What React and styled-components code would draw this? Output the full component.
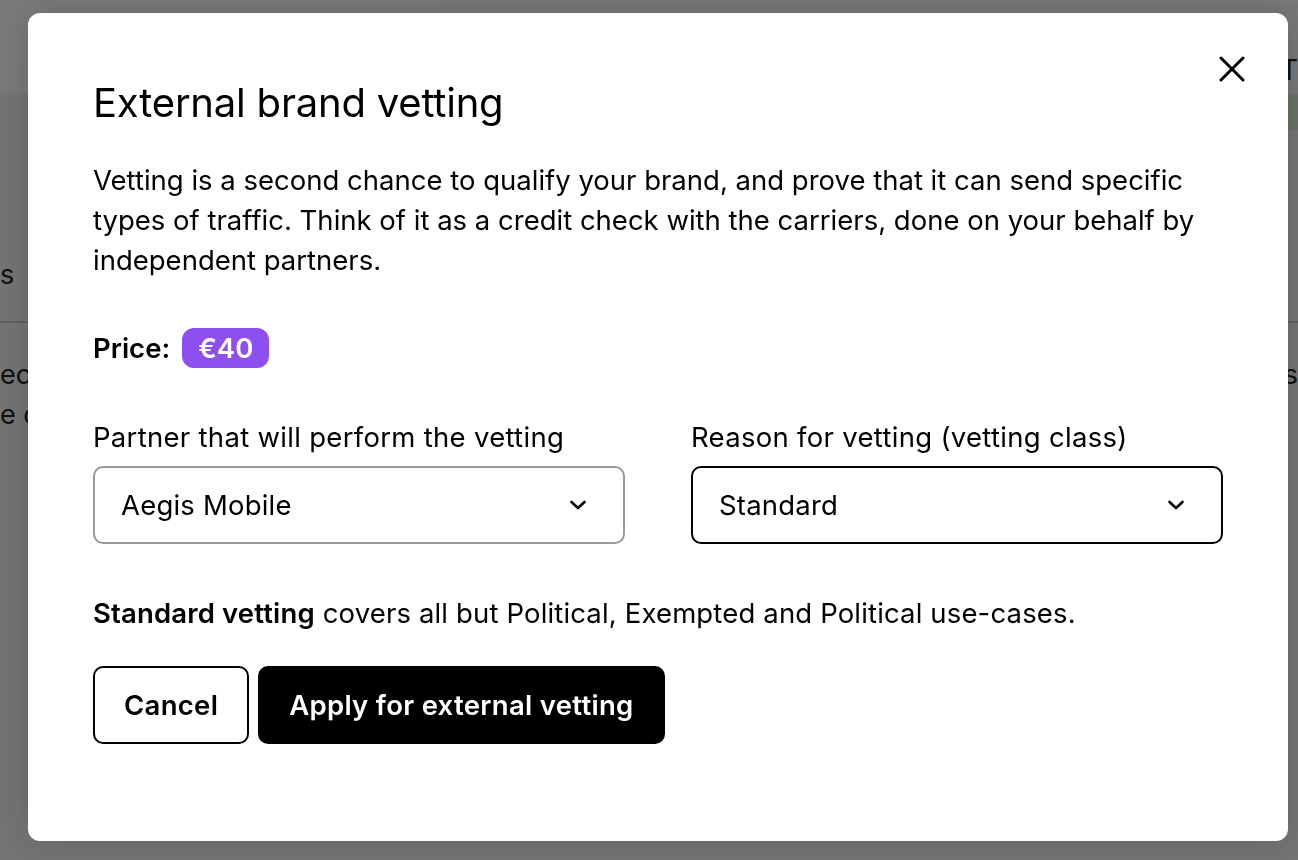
import styled, { createGlobalStyle } from "styled-components";

const GlobalStyle = createGlobalStyle`
  html, body {
    margin: 0;
    padding: 0;
    height: 100%;
  }
  body {
    font-family: Inter, "Noto Sans", sans-serif;
    background: #f3f3f3;
    color: #000;
    overflow: hidden;
  }
`

const Page = styled.div`
  height: 860px;
  background: #f3f3f3;
`

const Header = styled.header`
  height: 93px;
  background: #fff;
  display: flex;
  align-items: flex-end;
  padding-left: 425px;
  box-sizing: border-box;
`

const HeaderCard = styled.div`
  flex: 1;
  height: 90px;
  box-sizing: border-box;
  background: #fbfbfb;
  border-radius: 24px 0 0 0;
  display: flex;
  justify-content: flex-end;
  align-items: flex-end;
  padding: 0 0 8px 0;
  font-size: 28px;
  line-height: 30px;
  color: #222;
  overflow: hidden;
  white-space: nowrap;
`

const StatusBar = styled.div`
  display: flex;
  justify-content: flex-end;
  padding-top: 2px;
`

const StatusChip = styled.span`
  background: #d9ecd9;
  height: 35px;
  width: 40px;
  font-size: 26px;
  line-height: 35px;
  padding-left: 4px;
  color: #111;
  overflow: hidden;
`

const Tabs = styled.div`
  margin-top: 123px;
  height: 70px;
  box-sizing: border-box;
  border-bottom: 2px solid #ccc;
  display: flex;
  font-size: 27px;
  line-height: 44px;
  color: #222;
`

const BodyLines = styled.div`
  padding-top: 32px;
  display: flex;
  justify-content: space-between;
  font-size: 27px;
  line-height: 40px;
  color: #222;
`

const Overlay = styled.div`
  position: fixed;
  inset: 0;
  background: rgba(0, 0, 0, 0.52);
  display: flex;
  align-items: flex-start;
  justify-content: flex-start;
  padding: 13px 10px 19px 28px;
  box-sizing: border-box;
`

const Modal = styled.div`
  position: relative;
  width: 1260px;
  height: 828px;
  box-sizing: border-box;
  background: #fff;
  border-radius: 12px;
  box-shadow: 0 0 40px rgba(0, 0, 0, 0.18);
  padding: 64px 65px 0 65px;
  display: flex;
  flex-direction: column;
`

const CloseButton = styled.button`
  position: absolute;
  top: 32px;
  right: 32px;
  width: 48px;
  height: 48px;
  border: none;
  background: none;
  padding: 0;
  display: flex;
  align-items: center;
  justify-content: center;
  cursor: pointer;
`

const Title = styled.h1`
  margin: 0;
  font-size: 40px;
  line-height: 52px;
  font-weight: 400;
  letter-spacing: -0.2px;
`

const Text = styled.p`
  margin: 0;
  font-size: 27.5px;
  line-height: 40px;
  font-weight: 400;
  letter-spacing: ${p => p.$spacing || 0}px;
  margin-top: ${p => p.$top || 0}px;
`

const PriceRow = styled.div`
  display: flex;
  align-items: center;
  gap: 12px;
  margin-top: 48px;
  font-size: 27.5px;
  font-weight: 600;
`

const Badge = styled.span`
  background: #8e4ff2;
  color: #fff;
  border-radius: 12px;
  height: 40px;
  padding: 0 16px;
  display: inline-flex;
  align-items: center;
  font-weight: 600;
`

const Fields = styled.div`
  display: grid;
  grid-template-columns: 1fr 1fr;
  column-gap: 66px;
  margin-top: 54px;
`

const Field = styled.label`
  display: flex;
  flex-direction: column;
  gap: 14px;
`

const FieldLabel = styled.span`
  font-size: 27.5px;
  line-height: 30px;
  letter-spacing: 0.3px;
`

const Select = styled.div`
  height: 78px;
  box-sizing: border-box;
  border: 2px solid ${p => (p.$focused ? "#000" : "#9a9a9a")};
  border-radius: 10px;
  padding: 0 36px 0 26px;
  display: flex;
  align-items: center;
  justify-content: space-between;
  font-size: 27.5px;
  letter-spacing: 0.2px;
`

const Strong = styled.strong`
  font-weight: 600;
`

const Actions = styled.div`
  display: flex;
  gap: 9px;
  margin-top: 33px;
`

const Button = styled.button`
  height: 78px;
  box-sizing: border-box;
  border-radius: 10px;
  border: 2px solid #000;
  background: ${p => (p.$primary ? "#000" : "#fff")};
  color: ${p => (p.$primary ? "#fff" : "#000")};
  font-family: inherit;
  font-size: 27.5px;
  font-weight: 600;
  letter-spacing: 0.3px;
  padding: 0 ${p => (p.$primary ? 29 : 29)}px;
  cursor: pointer;
`

function Chevron() {
  return (
    <svg width="18" height="12" viewBox="0 0 18 12" fill="none">
      <path d="M2.5 3 9 9l6.5-6" stroke="#000" strokeWidth="2.6" strokeLinecap="round" strokeLinejoin="round" />
    </svg>
  );
}

function CloseIcon() {
  return (
    <svg width="28" height="28" viewBox="0 0 28 28" fill="none">
      <path d="M3 3 25 25M25 3 3 25" stroke="#000" strokeWidth="3" strokeLinecap="round" />
    </svg>
  );
}

export default function App() {
  return (
    <>
      <GlobalStyle />
      <Page>
        <Header>
          <HeaderCard>T</HeaderCard>
        </Header>
        <StatusBar>
          <StatusChip>ii</StatusChip>
        </StatusBar>
        <Tabs>
          <span>s</span>
        </Tabs>
        <BodyLines>
          <div>econd<br />e carriers</div>
          <div>ss</div>
        </BodyLines>
      </Page>
      <Overlay>
        <Modal role="dialog" aria-labelledby="vetting-title">
          <CloseButton aria-label="Close">
            <CloseIcon />
          </CloseButton>
          <Title id="vetting-title">External brand vetting</Title>
          <Text $top={31}>
            Vetting is a second chance to qualify your brand, and prove that it can send specific
            types of traffic. Think of it as a credit check with the carriers, done on your behalf by
            independent partners.
          </Text>
          <PriceRow>
            Price: <Badge>€40</Badge>
          </PriceRow>
          <Fields>
            <Field>
              <FieldLabel>Partner that will perform the vetting</FieldLabel>
              <Select>
                Aegis Mobile
                <Chevron />
              </Select>
            </Field>
            <Field>
              <FieldLabel>Reason for vetting (vetting class)</FieldLabel>
              <Select $focused>
                Standard
                <Chevron />
              </Select>
            </Field>
          </Fields>
          <Text $top={49} $spacing={0.15}>
            <Strong>Standard vetting</Strong> covers all but Political, Exempted and Political use-cases.
          </Text>
          <Actions>
            <Button>Cancel</Button>
            <Button $primary>Apply for external vetting</Button>
          </Actions>
        </Modal>
      </Overlay>
    </>
  );
}
